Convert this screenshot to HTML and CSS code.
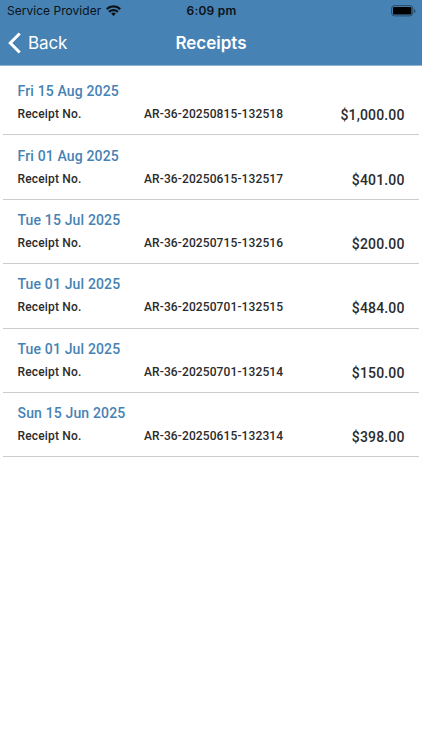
FILE: index.html
```html
<!DOCTYPE html>
<html lang="en">
<head>
<meta charset="utf-8">
<title>Receipts</title>
<link rel="stylesheet" href="styles.css">
</head>
<body>
<header class="top">
  <div class="status">
    <div class="carrier"><span>Service Provider</span>
      <svg class="wifi" width="15" height="11" viewBox="0 0 15 11" fill="none" stroke="#0b1218" stroke-width="2.3"><path d="M.8 4.1a9.6 9.6 0 0 1 13.4 0M3.1 6.9a6.2 6.2 0 0 1 8.8 0"/><path d="M7.5 11 5.2 8.7a3.3 3.3 0 0 1 4.6 0z" fill="#0b1218" stroke="none"/></svg>
    </div>
    <div class="time">6:09 pm</div>
    <svg class="battery" width="25" height="12" viewBox="0 0 25 12"><rect x=".6" y=".6" width="21.2" height="10.3" rx="3" fill="none" stroke="#0b1218" stroke-opacity=".5"/><rect x="2" y="2" width="18.4" height="7.5" rx="1.2" fill="#000"/><path d="M23.2 4v4c1.5-.6 1.5-3.4 0-4z" fill="#0b1218" fill-opacity=".6"/></svg>
  </div>
  <nav class="nav">
    <div class="back"><svg width="13" height="22" viewBox="0 0 13 22" fill="none" stroke="#fff" stroke-width="3"><path d="M11.7 1.5 2.3 11l9.4 9.5"/></svg><span>Back</span></div>
    <h1 class="title">Receipts</h1>
  </nav>
</header>
<main class="list">
  <article class="row"><h2 class="date">Fri 15 Aug 2025</h2><div class="line"><span class="label">Receipt No.</span><span class="number">AR-36-20250815-132518</span><span class="amount">$1,000.00</span></div></article>
  <article class="row"><h2 class="date">Fri 01 Aug 2025</h2><div class="line"><span class="label">Receipt No.</span><span class="number">AR-36-20250615-132517</span><span class="amount">$401.00</span></div></article>
  <article class="row"><h2 class="date">Tue 15 Jul 2025</h2><div class="line"><span class="label">Receipt No.</span><span class="number">AR-36-20250715-132516</span><span class="amount">$200.00</span></div></article>
  <article class="row"><h2 class="date">Tue 01 Jul 2025</h2><div class="line"><span class="label">Receipt No.</span><span class="number">AR-36-20250701-132515</span><span class="amount">$484.00</span></div></article>
  <article class="row"><h2 class="date">Tue 01 Jul 2025</h2><div class="line"><span class="label">Receipt No.</span><span class="number">AR-36-20250701-132514</span><span class="amount">$150.00</span></div></article>
  <article class="row"><h2 class="date">Sun 15 Jun 2025</h2><div class="line"><span class="label">Receipt No.</span><span class="number">AR-36-20250615-132314</span><span class="amount">$398.00</span></div></article>
</main>
</body>
</html>
```
FILE: styles.css
```css
* { box-sizing: border-box; }
body { margin: 0; background: #fff; font-family: Roboto, sans-serif; color: #2b2b2b; }
.top { height: 65.6px; background: #4682b4; border-bottom: 1px solid #91b4d2; font-family: Inter, sans-serif; }
.status { height: 21px; display: grid; grid-template-columns: 1fr auto 1fr; align-items: center; padding: 0 6px 0 7px; color: #0b1218; }
.carrier { display: flex; align-items: center; gap: 5px; font-size: 12px; letter-spacing: .03px; }
.time { font-size: 12px; font-weight: 600; letter-spacing: .2px; }
.battery { justify-self: end; }
.nav { height: 43px; display: grid; grid-template-columns: 1fr auto 1fr; align-items: center; padding: 0 8px; color: #fff; }
.back { display: flex; align-items: center; gap: 7px; font-size: 17px; letter-spacing: -.1px; }
.title { margin: 0; font-size: 17px; font-weight: 600; }
.list { padding: 5.4px 3px 0; }
.row { height: 64.4px; padding: 10.2px 14.5px 0; border-bottom: 1px solid #ccc; }
.date { margin: 0; font-size: 14px; line-height: 20px; font-weight: 500; color: #4682b4; letter-spacing: .15px; }
.line { display: grid; grid-template-columns: 126.5px 1fr auto; align-items: start; }
.label, .number { font-size: 12px; line-height: 26.4px; font-weight: 500; letter-spacing: .17px; }
.number { letter-spacing: .11px; }
.amount { font-size: 14px; line-height: 28.6px; font-weight: 500; letter-spacing: .15px; }
```
